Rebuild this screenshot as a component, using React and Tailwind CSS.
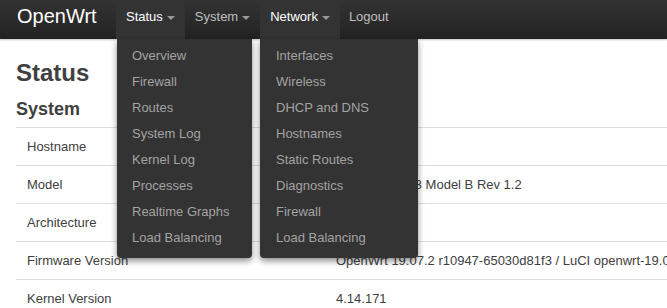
import React from "react";

const Caret = () => (
  <span className="ml-[4px] inline-block w-0 h-0 border-l-[4px] border-r-[4px] border-t-[4px] border-l-transparent border-r-transparent border-t-[#999] align-middle mt-[1px]" />
);

const statusItems = ["Overview", "Firewall", "Routes", "System Log", "Kernel Log", "Processes", "Realtime Graphs", "Load Balancing"];
const networkItems = ["Interfaces", "Wireless", "DHCP and DNS", "Hostnames", "Static Routes", "Diagnostics", "Firewall", "Load Balancing"];

const rows = [
  ["Hostname", "OpenWrt"],
  ["Model", "Raspberry Pi 3 Model B Rev 1.2"],
  ["Architecture", "ARMv7 rev 4"],
  ["Firmware Version", "OpenWrt 19.07.2 r10947-65030d81f3 / LuCI openwrt-19.07 branch git-20.057.55219-13dd17f"],
  ["Kernel Version", "4.14.171"],
];

function Dropdown({ items, className }) {
  return (
    <div className={"absolute top-[39px] bg-[#333] rounded-b-[4px] pt-[4px] pb-[7px] shadow-[0_3px_6px_rgba(0,0,0,0.45)] z-20 " + className}>
      {items.map((t, i) => (
        <div key={i} className="h-[26px] leading-[26px] pl-[15px] text-[13px] text-[#a3a3a3] whitespace-nowrap">{t}</div>
      ))}
    </div>
  );
}

export default function App() {
  return (
    <div className="relative w-[667px] h-[308px] overflow-hidden bg-white text-[#404040]" style={{ fontFamily: '"Liberation Sans", Arial, sans-serif' }}>
      <div className="h-[39px] bg-gradient-to-b from-[#333] to-[#222] flex items-stretch shadow-[0_1px_2px_rgba(0,0,0,0.25)] relative z-10">
        <div className="pl-[17px] text-[20px] text-white leading-[32px] w-[116px]">OpenWrt</div>
        <div className="flex items-center pb-[5px] px-[10px] bg-[#333] text-[13px] text-white">Status<Caret /></div>
        <div className="flex items-center pb-[5px] px-[10px] text-[13px] text-[#bfbfbf]">System<Caret /></div>
        <div className="flex items-center pb-[5px] px-[10px] bg-[#333] text-[13px] text-white">Network<Caret /></div>
        <div className="flex items-center pb-[5px] pl-[9px] pr-[10px] text-[13px] text-[#bfbfbf]">Logout</div>
      </div>
      <Dropdown items={statusItems} className="left-[117px] w-[135px]" />
      <Dropdown items={networkItems} className="left-[260px] w-[158px] pl-[1px]" />
      <div className="pl-[16px]">
        <h1 className="text-[24px] font-bold leading-[24px] mt-[22px] text-[#404040]">Status</h1>
        <h2 className="text-[18px] font-bold leading-[20px] mt-[14px] text-[#404040]">System</h2>
        <div className="mt-[8px] w-[800px]">
          {rows.map(([k, v], i) => (
            <div key={i} className="flex h-[38px] items-center border-t border-[#ddd] text-[13px]">
              <div className="w-[310px] shrink-0 pl-[11px]">{k}</div>
              <div className="pl-[10px] whitespace-nowrap">{v}</div>
            </div>
          ))}
        </div>
      </div>
    </div>
  );
}
